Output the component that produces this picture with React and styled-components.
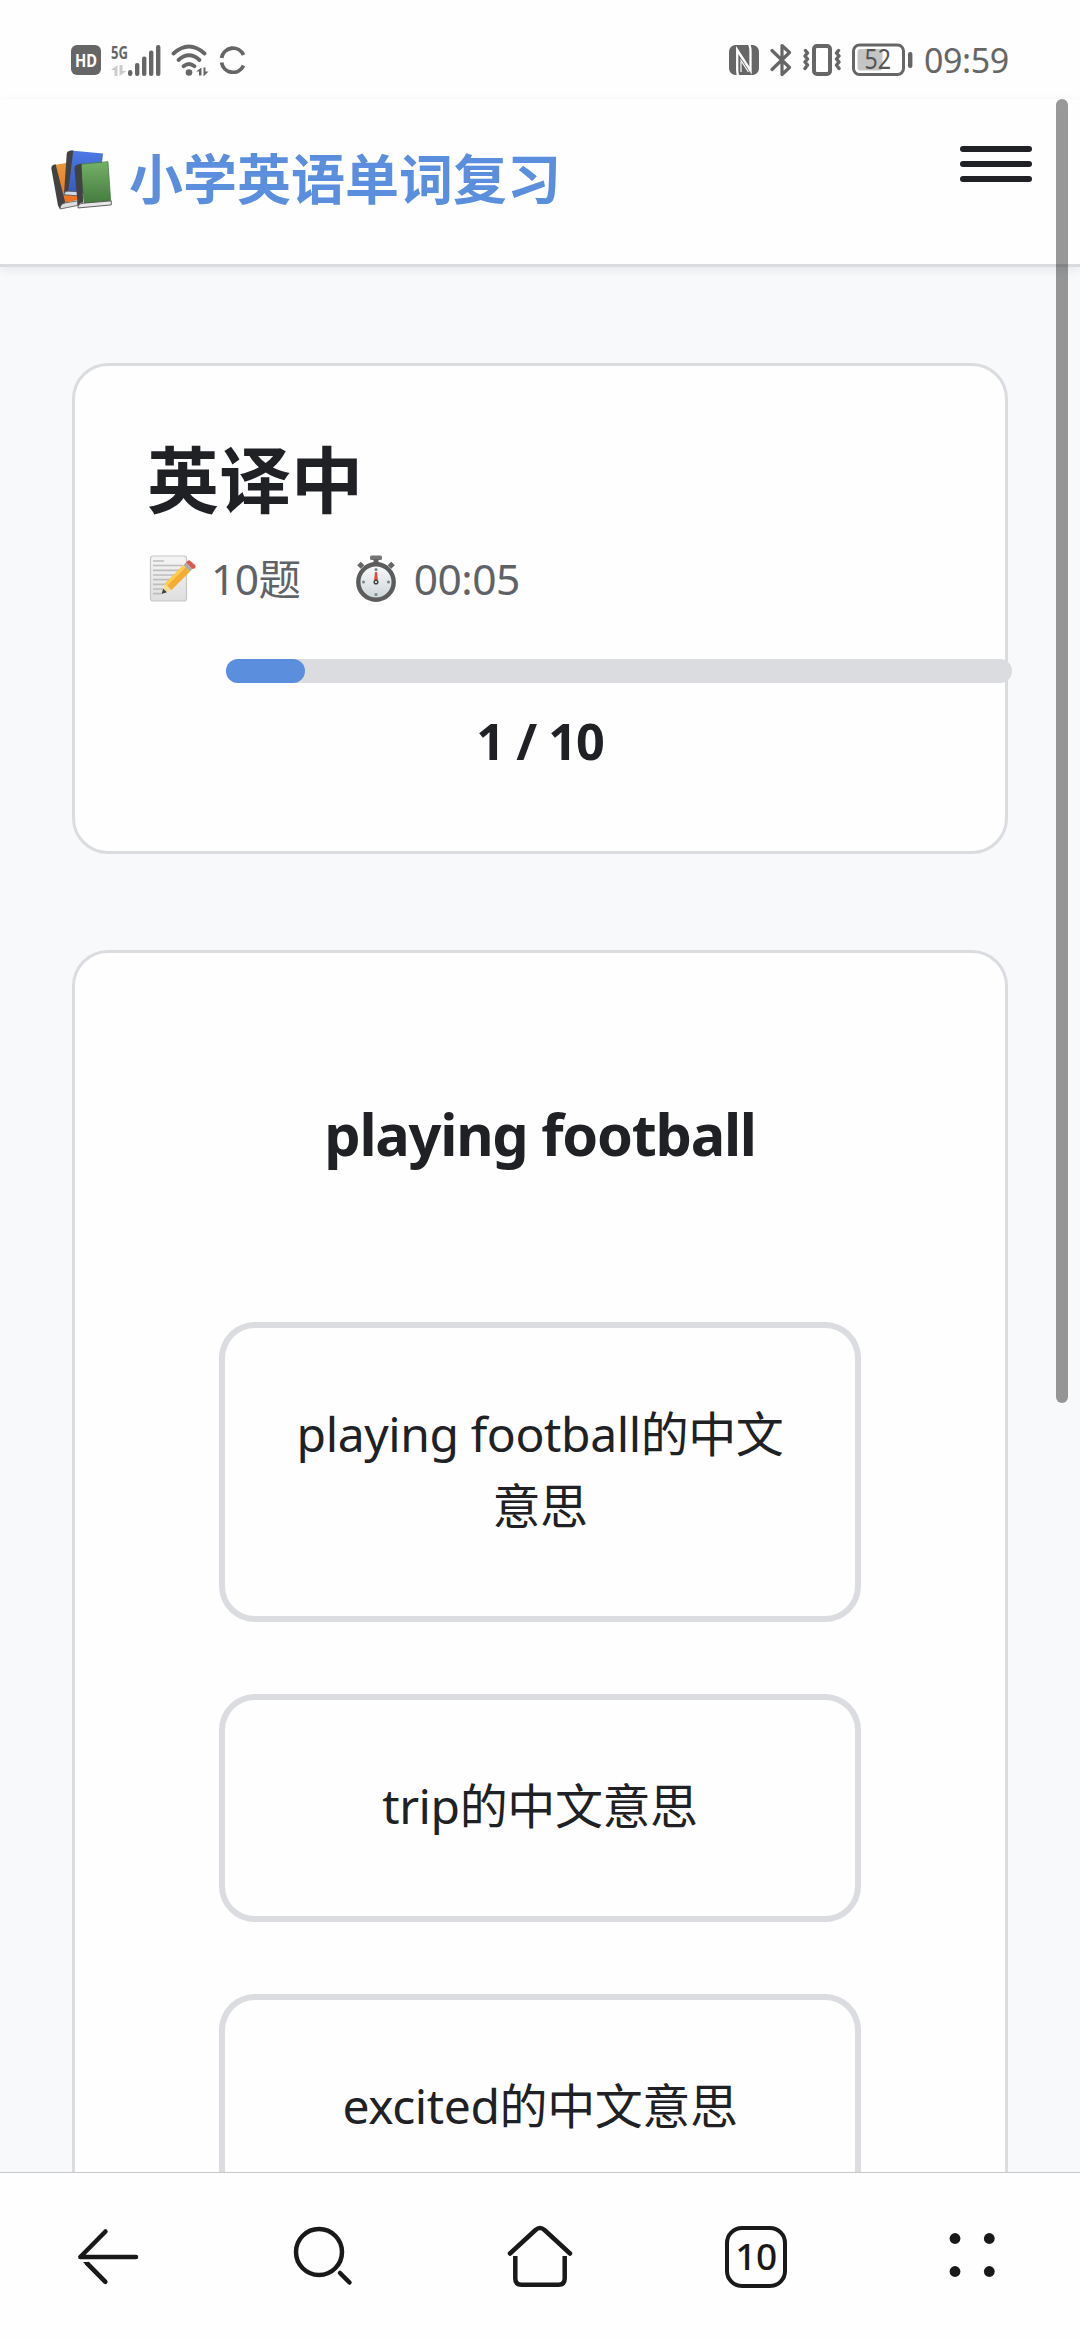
import React from 'react';
import styled, { createGlobalStyle } from 'styled-components';

const GlobalStyle = createGlobalStyle`
  *, *::before, *::after { box-sizing: border-box; }
  html, body { margin: 0; padding: 0; background: #fefefe; }
  body {
    font-family: "Noto Sans", "Noto Sans CJK SC", sans-serif;
    color: #202124;
    overflow: hidden;
  }
  svg { display: block; flex: none; }
`;

const Screen = styled.div`
  position: relative;
  display: flex;
  flex-direction: column;
  width: 1080px;
  height: 2340px;
  overflow: hidden;
  background: #fefefe;
`;

/* ---------- status bar ---------- */

const StatusBar = styled.div`
  flex: none;
  display: flex;
  justify-content: space-between;
  height: 99px;
  padding: 40px 72px 0 71px;
`;

const StatusGroup = styled.div`
  display: flex;
  align-items: center;
  height: 40px;
  gap: ${(p) => p.$gap}px;
`;

const Clock = styled.span`
  width: 84px;
  font-size: 34px;
  line-height: 40px;
  letter-spacing: -0.4px;
  white-space: nowrap;
  color: #666;
`;

/* ---------- page header ---------- */

const Header = styled.header`
  flex: none;
  position: relative;
  z-index: 1;
  display: flex;
  justify-content: space-between;
  height: 168px;
  padding: 44px 48px 0;
  background: #fefefe;
  border-bottom: 3px solid #dadbdf;
  box-shadow: 0 3px 9px rgba(32, 33, 36, 0.08);
`;

const Brand = styled.h1`
  display: flex;
  align-items: center;
  gap: 15px;
  height: 72px;
  margin: 0;
  font-size: 54px;
  line-height: 72px;
  font-weight: 700;
  color: #5b8edc;
`;

const MenuButton = styled.button`
  display: flex;
  flex-direction: column;
  gap: 9px;
  width: 72px;
  height: 36px;
  margin: 3px 0 0;
  padding: 0;
  border: 0;
  background: none;
`;

const MenuLine = styled.span`
  height: 6px;
  border-radius: 3px;
  background: #202124;
`;

/* ---------- content ---------- */

const Content = styled.main`
  flex: 1;
  min-height: 0;
  overflow: hidden;
  display: flex;
  flex-direction: column;
  gap: 96px;
  padding: 96px 72px 0;
  background: #f8f9fb;
`;

const Card = styled.section`
  flex: none;
  display: flex;
  flex-direction: column;
  padding: 72px;
  border: 3px solid #dadce0;
  border-radius: 36px;
  background: #fefefe;
`;

const QuizTitle = styled.h2`
  margin: 0;
  font-size: 72px;
  line-height: 82px;
  font-weight: 700;
`;

const MetaRow = styled.div`
  display: flex;
  gap: 53px;
  height: 60px;
  margin-top: 29px;
`;

const MetaItem = styled.div`
  display: flex;
  align-items: center;
  gap: ${(p) => p.$gap}px;
  font-size: 42.5px;
  line-height: 60px;
  letter-spacing: -0.5px;
  color: #5f6368;
`;

const Progress = styled.div`
  flex: none;
  width: 786px;
  height: 24px;
  margin: 50px 0 0 79px;
  border-radius: 12px;
  background: #dadce0;
`;

const ProgressFill = styled.div`
  height: 100%;
  border-radius: 12px;
  background: #5b8edc;
`;

const Count = styled.div`
  margin: 22px 0 2px;
  text-align: center;
  font-size: 50.4px;
  line-height: 72px;
  font-weight: 700;
  letter-spacing: -1px;
`;

const Question = styled.h3`
  margin: 65px 0 145px;
  text-align: center;
  font-size: 57.6px;
  line-height: 87px;
  font-weight: 700;
  letter-spacing: -1.25px;
`;

const Options = styled.div`
  display: flex;
  flex-direction: column;
  gap: 72px;
  padding: 0 72px;
`;

const Option = styled.button`
  margin: 0;
  padding: 70px 66px 74px;
  border: 6px solid #dadce0;
  border-radius: 36px;
  background: #fefefe;
  color: inherit;
  font-family: inherit;
  font-size: 48px;
  line-height: 72px;
  letter-spacing: -0.4px;
  text-align: center;
`;

/* ---------- browser toolbar ---------- */

const Toolbar = styled.nav`
  flex: none;
  display: grid;
  grid-template-columns: repeat(5, 216px);
  height: 168px;
  border-top: 1px solid #c8c8c8;
  background: #fefefe;
`;

const ToolButton = styled.button`
  display: flex;
  justify-content: center;
  margin: 0;
  padding: 48px 0 0;
  border: 0;
  background: none;
  color: #191919;
`;

const TabCount = styled.span`
  display: flex;
  align-items: center;
  justify-content: center;
  width: 62px;
  height: 62px;
  margin-top: 5px;
  padding-bottom: 3px;
  border: 4.5px solid #191919;
  border-radius: 17px;
  font-family: "Noto Sans", sans-serif;
  font-size: 37px;
  line-height: 50px;
  font-weight: 500;
  letter-spacing: -0.5px;
`;

const Scrollbar = styled.div`
  position: absolute;
  z-index: 2;
  top: 99px;
  right: 12px;
  width: 12px;
  height: 1304px;
  border-radius: 6px;
  background: rgba(0, 0, 0, 0.4);
`;

/* ---------- icons ---------- */

const Glyph = styled.svg`
  overflow: visible;
`;

const HdIcon = () => (
  <Glyph width="30" height="30" viewBox="0 0 30 30">
    <rect width="30" height="30" rx="6" fill="#666" />
    <text x="4" y="22" fontSize="17.5" fontWeight="700" fill="#fefefe" textLength="22" lengthAdjust="spacingAndGlyphs">HD</text>
  </Glyph>
);

const SignalIcon = () => (
  <Glyph width="50" height="32" viewBox="0 0 50 32" fill="#666">
    <text x="0" y="14.5" fontSize="18.5" fontWeight="700" textLength="17" lengthAdjust="spacingAndGlyphs">5G</text>
    <path d="M6.5 21v11H3.500v-6H0zM8.500 21H11.500v6H15.500L8.500 32z" fill="#ccc" />
    <rect x="17" y="26" width="4.4" height="6" rx="2.200" />
    <rect x="24" y="19" width="4.4" height="13" rx="2" />
    <rect x="31" y="12.500" width="4.400" height="19.500" rx="2" />
    <rect x="38" y="6.500" width="4.400" height="25.500" rx="2" />
    <rect x="45" y="1" width="4.400" height="31" rx="2" />
  </Glyph>
);

const WifiIcon = () => (
  <svg width="38" height="32" viewBox="0 0 38 32" fill="none" stroke="#666" strokeWidth="3.8" strokeLinecap="round">
    <path d="M2.500 9.500Q18 -4.500 33.500 9.500" />
    <path d="M7.500 16Q18 6.500 28.500 16" />
    <path d="M12.500 22.300Q18 17.800 23.500 22.300" />
    <circle cx="18" cy="28.500" r="3.300" fill="#666" stroke="none" />
    <path d="M30.500 23.500v8h-2.500v-4h-3zM32.500 23.500h2v4h3l-5 5z" fill="#666" stroke="none" />
  </svg>
);

const RingIcon = () => (
  <svg width="28" height="28" viewBox="0 0 28 28" fill="none" stroke="#666" strokeWidth="3.8">
    <path d="M2.600 12A11.500 11.500 0 0 1 24.500 9" />
    <path d="M2.600 16.500A11.500 11.500 0 0 0 24.500 19.500" />
  </svg>
);

const NfcIcon = () => (
  <svg width="30" height="30" viewBox="0 0 30 30">
    <rect width="30" height="30" rx="6.500" fill="#666" />
    <g fill="none" stroke="#fefefe" strokeLinejoin="miter">
      <path d="M9.500 31Q8.200 29 8.200 25V5L21.500 25.500V6Q21.500 2 20 -1" strokeWidth="2.300" />
      <path d="M12 27V15.500L19.500 27" strokeWidth="1.200" />
    </g>
  </svg>
);

const BluetoothIcon = () => (
  <svg width="22" height="34" viewBox="0 0 22 34" fill="none" stroke="#666" strokeWidth="3.200" strokeLinecap="round" strokeLinejoin="round">
    <path d="M2 7.500L19.500 24.500L12 31.500V2.500L19.500 9.500L2 26.500" />
  </svg>
);

const VibrateIcon = () => (
  <svg width="38" height="32" viewBox="0 0 38 32" fill="none" stroke="#666" strokeLinejoin="round" strokeLinecap="round">
    <rect x="11" y="2" width="16" height="28" rx="3" strokeWidth="4" />
    <path d="M2.500 6.500l2 2.500-2.500 3 2.500 3-2.500 3 2.500 3-2.500 3.500M35.500 6.500l-2 2.500 2.500 3-2.500 3 2.500 3-2.500 3 2.500 3.500" strokeWidth="3.400" />
  </svg>
);

const BatteryIcon = () => (
  <Glyph width="61" height="34" viewBox="0 0 61 34">
    <rect x="1.500" y="2" width="50" height="29.500" rx="6" fill="none" stroke="#666" strokeWidth="3" />
    <rect x="5.500" y="6" width="25" height="21.500" rx="3" fill="#c4c4c4" />
    <text x="12.500" y="26" fontSize="26.500" fill="#555" textLength="26.500" lengthAdjust="spacingAndGlyphs">52</text>
    <rect x="56" y="9" width="4.400" height="16" rx="2" fill="#666" />
  </Glyph>
);

const BooksIcon = () => (
  <svg width="66" height="61" viewBox="0 0 60 60" preserveAspectRatio="none">
    <defs>
      <linearGradient id="bkGreen" x1="0" y1="0" x2="0" y2="1">
        <stop offset="0" stopColor="#75b068" />
        <stop offset="1" stopColor="#427b3c" />
      </linearGradient>
      <linearGradient id="bkBlue" x1="0" y1="0" x2="0" y2="1">
        <stop offset="0" stopColor="#4e78e6" />
        <stop offset="1" stopColor="#3459b8" />
      </linearGradient>
      <linearGradient id="bkOrange" x1="0" y1="0" x2="0" y2="1">
        <stop offset="0" stopColor="#e59a3c" />
        <stop offset="1" stopColor="#ee6f22" />
      </linearGradient>
    </defs>
    <path d="M7 15.500L20 13L28 50L14 53z" fill="url(#bkOrange)" />
    <path d="M3 19Q3 15.500 7 15L16 54Q12 55 11 59Q9.500 57 9 55z" fill="#424242" />
    <path d="M11 59Q11 54 15.500 53L27 51V55.500z" fill="#ddd" stroke="#555" strokeWidth="0.800" />
    <path d="M20.500 1.500L50 4.500L46 46L17 42z" fill="url(#bkBlue)" />
    <path d="M17 5Q17 1 23 1.500L18.500 41Q15 41 14.500 45z" fill="#424242" />
    <path d="M14.500 45Q15 41 19 41.500L27 42V46z" fill="#d4dbe8" stroke="#555" strokeWidth="0.800" />
    <path d="M29 15L54.500 12.500L57 51L33 54z" fill="url(#bkGreen)" stroke="#427b3c" strokeWidth="0.700" />
    <path d="M24 19Q24 15 30.500 14.500L32 52.500Q27 53 27.300 58z" fill="#424242" />
    <path d="M27.300 58Q27 54 32 53.300L57.500 51V55L27.300 58z" fill="#e6e6e6" stroke="#555" strokeWidth="0.900" />
  </svg>
);

const MemoIcon = () => (
  <svg width="50" height="50" viewBox="-2.5 0 50 50">
    <defs>
      <linearGradient id="memoPaper" x1="0" y1="0" x2="0" y2="1">
        <stop offset="0" stopColor="#f5f5f5" />
        <stop offset="1" stopColor="#dedede" />
      </linearGradient>
    </defs>
    <rect x="1" y="2" width="36" height="45" rx="2.500" fill="url(#memoPaper)" stroke="#c6c6c6" strokeWidth="1.200" />
    <path d="M3.500 7H14.500M3.500 11.500H33M3.500 16.300H33M3.500 21H33M3.500 25.700H31M3.500 30.300H26M3.500 35H21M3.500 39.700H11.500" stroke="#bdbdbd" strokeWidth="1.700" />
    <path d="M12 40L15.500 29.500L22 36z" fill="#f6dc98" />
    <path d="M15.500 29.500L34 11L40.500 17.500L22 36z" fill="#f3ad32" />
    <path d="M15.500 29.500L34 11L36.200 13.200L17.700 31.700z" fill="#ffcc4d" />
    <path d="M12 40L13.700 34.700L17.500 38.300z" fill="#424242" />
    <path d="M34 11L36.500 8.500L43 15L40.500 17.500z" fill="#aaa" />
    <path d="M36.500 8.500L38 7Q39.500 5.500 41.500 7.500L45.500 11Q47 13 45 14.500L43 15z" fill="#d75a55" />
  </svg>
);

const StopwatchIcon = () => (
  <svg width="44" height="50" viewBox="0 0 44 50">
    <defs>
      <linearGradient id="watchFace" x1="0" y1="0" x2="0" y2="1">
        <stop offset="0" stopColor="#f8fafb" />
        <stop offset="1" stopColor="#ccd5da" />
      </linearGradient>
    </defs>
    <rect x="16" y="1.500" width="12" height="4.500" rx="1.500" fill="#757575" />
    <rect x="19.500" y="5" width="5" height="5" fill="#616161" />
    <path d="M5 13L8.500 9.500M39 13L35.500 9.500" stroke="#666" strokeWidth="5" />
    <circle cx="22" cy="28" r="17.700" fill="url(#watchFace)" stroke="#5c5c5c" strokeWidth="4.400" />
    <g fill="#78858b">
      <circle cx="22" cy="15.500" r="1.500" />
      <circle cx="22" cy="40.500" r="1.500" />
      <circle cx="9.500" cy="28" r="1.500" />
      <circle cx="34.500" cy="28" r="1.500" />
    </g>
    <path d="M21 18H23L24 27H20z" fill="#e64a3f" />
    <circle cx="22" cy="28" r="1.800" fill="#fff" stroke="#424242" strokeWidth="1.500" />
  </svg>
);

const navStroke = {
  fill: 'none',
  stroke: 'currentColor',
  strokeWidth: 4.5,
  strokeLinecap: 'round',
  strokeLinejoin: 'round',
};

const BackIcon = () => (
  <svg width="72" height="72" viewBox="0 0 72 72" {...navStroke}>
    <path d="M64 36H8.300L33.500 10.500" />
    <path d="M14.500 42L33.500 61" strokeLinecap="butt" />
    <path d="M11 41H17L34.900 59.200A2.200 2.200 0 0 1 31.900 62.500z" fill="currentColor" stroke="none" />
  </svg>
);

const SearchIcon = () => (
  <svg width="72" height="72" viewBox="0 0 72 72" {...navStroke}>
    <circle cx="31" cy="31" r="23" />
    <path d="M52 52L61.500 61.500" />
    <path d="M48 51L52 47" stroke="#fefefe" strokeWidth="1.500" />
  </svg>
);

const HomeIcon = () => (
  <svg width="72" height="72" viewBox="0 0 72 72" {...navStroke}>
    <path d="M11.300 35V57.500Q11.300 63.700 17.500 63.700H54.500Q60.700 63.700 60.700 57.500V35" strokeLinecap="butt" />
    <path d="M6 32.500L31.500 9Q36 5 40.500 9L66 32.500" stroke="#fefefe" strokeWidth="8" />
    <path d="M6 32.500L31.500 9Q36 5 40.500 9L66 32.500" />
  </svg>
);

const MoreIcon = () => (
  <svg width="72" height="72" viewBox="0 0 72 72" fill="currentColor">
    <circle cx="19" cy="17.500" r="5.400" />
    <circle cx="53.300" cy="17.500" r="5.400" />
    <circle cx="19" cy="50.500" r="5.400" />
    <circle cx="53.300" cy="50.500" r="5.400" />
  </svg>
);

/* ---------- screen ---------- */

const quiz = { title: '英译中', total: 10, current: 1, elapsed: '00:05', word: 'playing football' };
const choices = ['playing football', 'trip', 'excited'];

export default function App() {
  return (
    <Screen>
      <GlobalStyle />
      <StatusBar>
        <StatusGroup $gap={10}>
          <HdIcon />
          <SignalIcon />
          <WifiIcon />
          <RingIcon />
        </StatusGroup>
        <StatusGroup $gap={11}>
          <NfcIcon />
          <BluetoothIcon />
          <VibrateIcon />
          <BatteryIcon />
          <Clock>09:59</Clock>
        </StatusGroup>
      </StatusBar>

      <Header>
        <Brand>
          <BooksIcon />
          小学英语单词复习
        </Brand>
        <MenuButton aria-label="menu">
          <MenuLine />
          <MenuLine />
          <MenuLine />
        </MenuButton>
      </Header>

      <Content>
        <Card>
          <QuizTitle>{quiz.title}</QuizTitle>
          <MetaRow>
            <MetaItem $gap={14}>
              <MemoIcon />
              <span>{`${quiz.total}题`}</span>
            </MetaItem>
            <MetaItem $gap={16}>
              <StopwatchIcon />
              <span>{quiz.elapsed}</span>
            </MetaItem>
          </MetaRow>
          <Progress>
            <ProgressFill style={{ width: `${(quiz.current / quiz.total) * 100}%` }} />
          </Progress>
          <Count>{`${quiz.current} / ${quiz.total}`}</Count>
        </Card>

        <Card>
          <Question>{quiz.word}</Question>
          <Options>
            {choices.map((word) => (
              <Option key={word}>{`${word}的中文意思`}</Option>
            ))}
          </Options>
        </Card>
      </Content>

      <Toolbar>
        <ToolButton aria-label="back"><BackIcon /></ToolButton>
        <ToolButton aria-label="search"><SearchIcon /></ToolButton>
        <ToolButton aria-label="home"><HomeIcon /></ToolButton>
        <ToolButton aria-label="tabs"><TabCount>10</TabCount></ToolButton>
        <ToolButton aria-label="more"><MoreIcon /></ToolButton>
      </Toolbar>
      <Scrollbar />
    </Screen>
  );
}
